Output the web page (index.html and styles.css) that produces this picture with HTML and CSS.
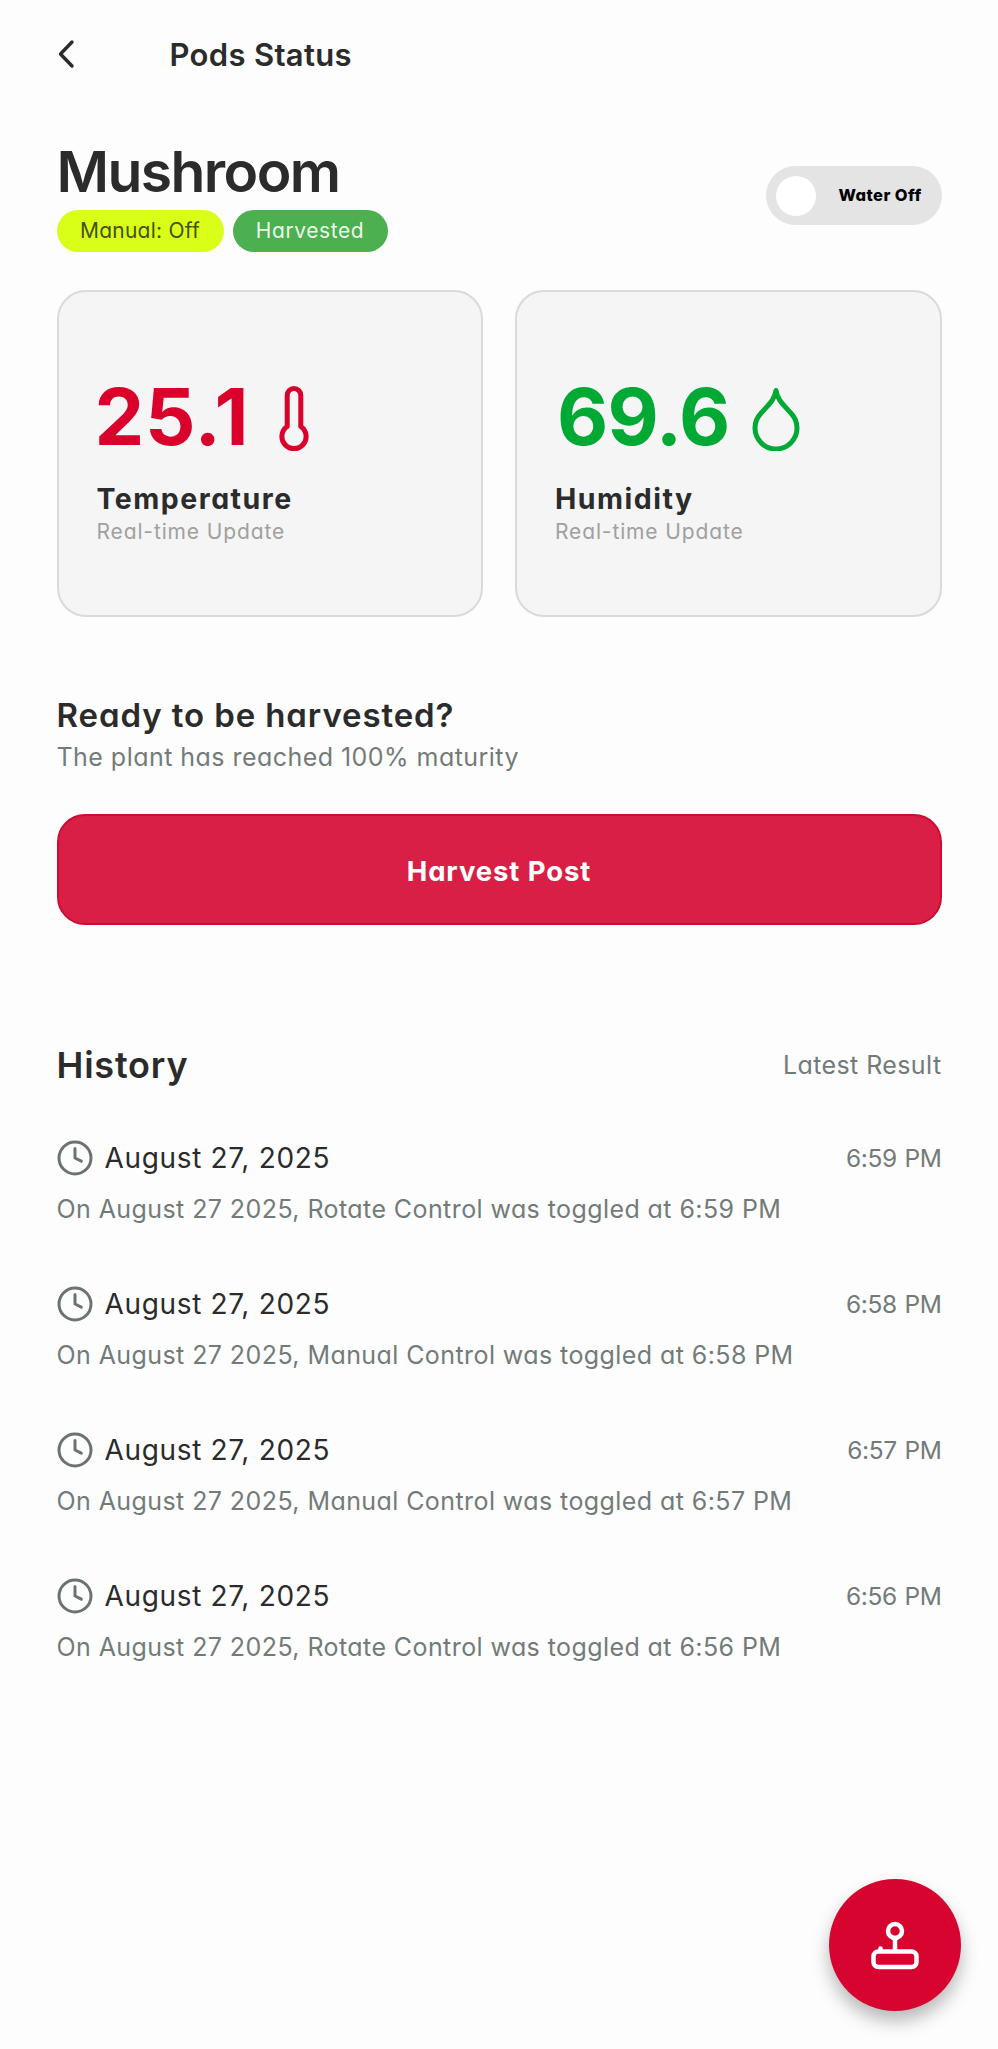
FILE: index.html
```
<!DOCTYPE html>
<html lang="en">
<head>
<meta charset="utf-8">
<title>Pods Status</title>
<link rel="stylesheet" href="styles.css">
</head>
<body>
<main class="page">
  <header class="topbar">
    <svg class="back" width="20" height="30" viewBox="0 0 20 30"><path d="M15 3 3.500 15l11.500 12"/></svg>
    <span class="topbar-title">Pods Status</span>
  </header>

  <section class="pod">
    <div>
      <h1 class="pod-name">Mushroom</h1>
      <div class="pills">
        <span class="pill pill-manual">Manual: Off</span>
        <span class="pill pill-done">Harvested</span>
      </div>
    </div>
    <div class="toggle"><span class="knob"></span><span class="toggle-label">Water Off</span></div>
  </section>

  <section class="cards">
    <article class="card card-temp">
      <div class="reading">
        <span class="value">25.1</span>
        <svg class="reading-icon" width="30" height="67" viewBox="0 0 30 67"><path d="M8.2 41.5V10.2a6.8 6.8 0 0 1 13.6 0v31.3a12.1 12.1 0 1 1-13.6 0z"/></svg>
      </div>
      <h2 class="label">Temperature</h2>
      <p class="sub">Real-time Update</p>
    </article>
    <article class="card card-hum">
      <div class="reading">
        <span class="value">69.6</span>
        <svg class="reading-icon" width="48" height="66" viewBox="0 0 48 66"><path d="M24 5.5C23 15 15 21 8.8 28.500A21 21 0 1 0 39.200 28.500C33 21 25 15 24 5.500z"/></svg>
      </div>
      <h2 class="label">Humidity</h2>
      <p class="sub">Real-time Update</p>
    </article>
  </section>

  <section class="harvest">
    <h2 class="harvest-title">Ready to be harvested?</h2>
    <p class="harvest-text">The plant has reached 100% maturity</p>
    <button class="harvest-btn">Harvest Post</button>
  </section>

  <section class="history">
    <div class="history-head">
      <h2 class="history-title">History</h2>
      <span class="latest">Latest Result</span>
    </div>
    <ul class="log">
      <li class="entry">
        <div class="entry-row">
          <svg class="clock" width="36" height="36" viewBox="0 0 36 36"><circle cx="18" cy="18" r="16"/><path d="M18 8.500v9.500l6.300 3.200"/></svg>
          <span class="date">August 27, 2025</span><span class="time">6:59 PM</span>
        </div>
        <p class="desc">On August 27 2025, Rotate Control was toggled at 6:59 PM</p>
      </li>
      <li class="entry">
        <div class="entry-row">
          <svg class="clock" width="36" height="36" viewBox="0 0 36 36"><circle cx="18" cy="18" r="16"/><path d="M18 8.500v9.500l6.300 3.200"/></svg>
          <span class="date">August 27, 2025</span><span class="time">6:58 PM</span>
        </div>
        <p class="desc">On August 27 2025, Manual Control was toggled at 6:58 PM</p>
      </li>
      <li class="entry">
        <div class="entry-row">
          <svg class="clock" width="36" height="36" viewBox="0 0 36 36"><circle cx="18" cy="18" r="16"/><path d="M18 8.500v9.500l6.300 3.200"/></svg>
          <span class="date">August 27, 2025</span><span class="time">6:57 PM</span>
        </div>
        <p class="desc">On August 27 2025, Manual Control was toggled at 6:57 PM</p>
      </li>
      <li class="entry">
        <div class="entry-row">
          <svg class="clock" width="36" height="36" viewBox="0 0 36 36"><circle cx="18" cy="18" r="16"/><path d="M18 8.500v9.500l6.300 3.200"/></svg>
          <span class="date">August 27, 2025</span><span class="time">6:56 PM</span>
        </div>
        <p class="desc">On August 27 2025, Rotate Control was toggled at 6:56 PM</p>
      </li>
    </ul>
  </section>

  <button class="fab" aria-label="Controls">
    <svg width="50" height="50" viewBox="0 0 50 50"><circle cx="25" cy="11" r="7"/><path d="M25 18v13M10.500 31v-2.500"/><rect x="3.500" y="31.500" width="43" height="15.500" rx="5"/></svg>
  </button>
</main>
</body>
</html>
```
FILE: styles.css
```
* { box-sizing: border-box; margin: 0; padding: 0; }
body {
  background: #fdfdfd;
  color: #2b2b2b;
  font-family: Inter, "Liberation Sans", sans-serif;
  font-feature-settings: "cv11";
}
svg { fill: none; stroke: currentColor; stroke-linecap: round; stroke-linejoin: round; flex: none; }
ul { list-style: none; }
button { border: 0; font-family: inherit; font-feature-settings: inherit; }

.page { position: relative; height: 2049px; padding: 0 56.500px; overflow: hidden; }

.topbar { display: flex; align-items: center; height: 110px; }
.back { stroke-width: 3.400px; margin-top: -2px; }
.topbar-title {
  margin-left: 93px;
  font-size: 31px; font-weight: 600; line-height: 40px; letter-spacing: .32px;
  font-feature-settings: normal;
}

.pod { display: flex; justify-content: space-between; align-items: flex-start; padding-top: 27px; }
.pod-name { font-size: 57px; font-weight: 600; line-height: 70px; letter-spacing: -1.600px; }
.pills { display: flex; gap: 9px; margin-top: 3px; }
.pill {
  display: flex; justify-content: center; align-items: center;
  height: 42px; border-radius: 21px;
  font-size: 21px; line-height: 42px;
}
.pill-manual { width: 167px; background: #d9ff19; color: #43510f; letter-spacing: .24px; }
.pill-done { width: 155px; background: #4caf50; color: #ebf8e9; letter-spacing: .580px; }
.toggle {
  display: flex; align-items: center;
  width: 176px; height: 59px; margin-top: 29px; padding-left: 10px;
  border-radius: 30px; background: #e4e4e4;
}
.knob { width: 40px; height: 40px; border-radius: 50%; background: #fff; }
.toggle-label { margin: -2px 0 0 23px; color: #000; font-size: 16.500px; font-weight: 800; letter-spacing: .430px; line-height: 24px; }

.cards { display: grid; grid-template-columns: 1fr 1fr; gap: 32px; margin-top: 38px; }
.card {
  height: 327px; padding: 84px 38px 0;
  border: 2px solid #dadada; border-radius: 29px; background: #f5f5f5;
}
.reading { display: flex; align-items: flex-start; height: 80px; }
.value { font-size: 79px; font-weight: 700; line-height: 80px; }
.reading-icon { stroke-width: 5px; }
.card-temp .reading { margin-left: -2px; color: #d9002b; }
.card-temp .value { letter-spacing: .770px; }
.card-temp .reading-icon { margin: 9px 0 0 30px; }
.card-hum .reading { margin-left: 2px; color: #00a834; }
.card-hum .value { letter-spacing: -.790px; }
.card-hum .reading-icon { margin: 9px 0 0 22px; }
.label { margin-top: 25.500px; font-size: 28.500px; font-weight: 700; line-height: 34px; letter-spacing: 1.500px; }
.sub { margin-top: 3.500px; color: #a0a0a0; font-size: 21px; line-height: 26px; letter-spacing: .870px; }

.harvest-title { margin-top: 78px; font-size: 33px; font-weight: 600; line-height: 40px; letter-spacing: .900px; }
.harvest-text { margin-top: 4px; color: #737b79; font-size: 25px; line-height: 36px; letter-spacing: .460px; }
.harvest-btn {
  display: block; width: 100%; height: 111px; margin-top: 39px; padding-top: 2px;
  border: 2px solid #cc0c33; border-radius: 28px; background: #d91f45;
  color: #fff; font-size: 27.500px; font-weight: 700; letter-spacing: .900px; line-height: 36px;
}

.history-head { display: flex; justify-content: space-between; align-items: center; margin-top: 116px; }
.history-title { font-size: 36px; font-weight: 600; line-height: 48px; letter-spacing: .800px; }
.latest { color: #737b79; font-size: 25px; line-height: 48px; letter-spacing: .410px; }
.log { display: grid; gap: 62px; margin-top: 51px; }
.entry-row { display: flex; align-items: center; height: 36px; }
.clock { color: #6b7371; stroke-width: 3px; }
.date { margin-left: 12px; font-size: 28px; line-height: 38px; letter-spacing: .670px; }
.time { margin-left: auto; color: #737b79; font-size: 24.500px; line-height: 36px; letter-spacing: -.350px; word-spacing: 1px; }
.desc { margin-top: 18px; color: #737b79; font-size: 25px; line-height: 30px; letter-spacing: .420px; }

.fab {
  position: absolute; right: 37.500px; bottom: 38px;
  display: flex; justify-content: center; align-items: center;
  width: 132px; height: 132px; border-radius: 50%;
  background: #d6042f; color: #fff;
  box-shadow: 0 10px 18px rgba(0, 0, 0, .28);
}
.fab svg { stroke-width: 4.500px; }
```
